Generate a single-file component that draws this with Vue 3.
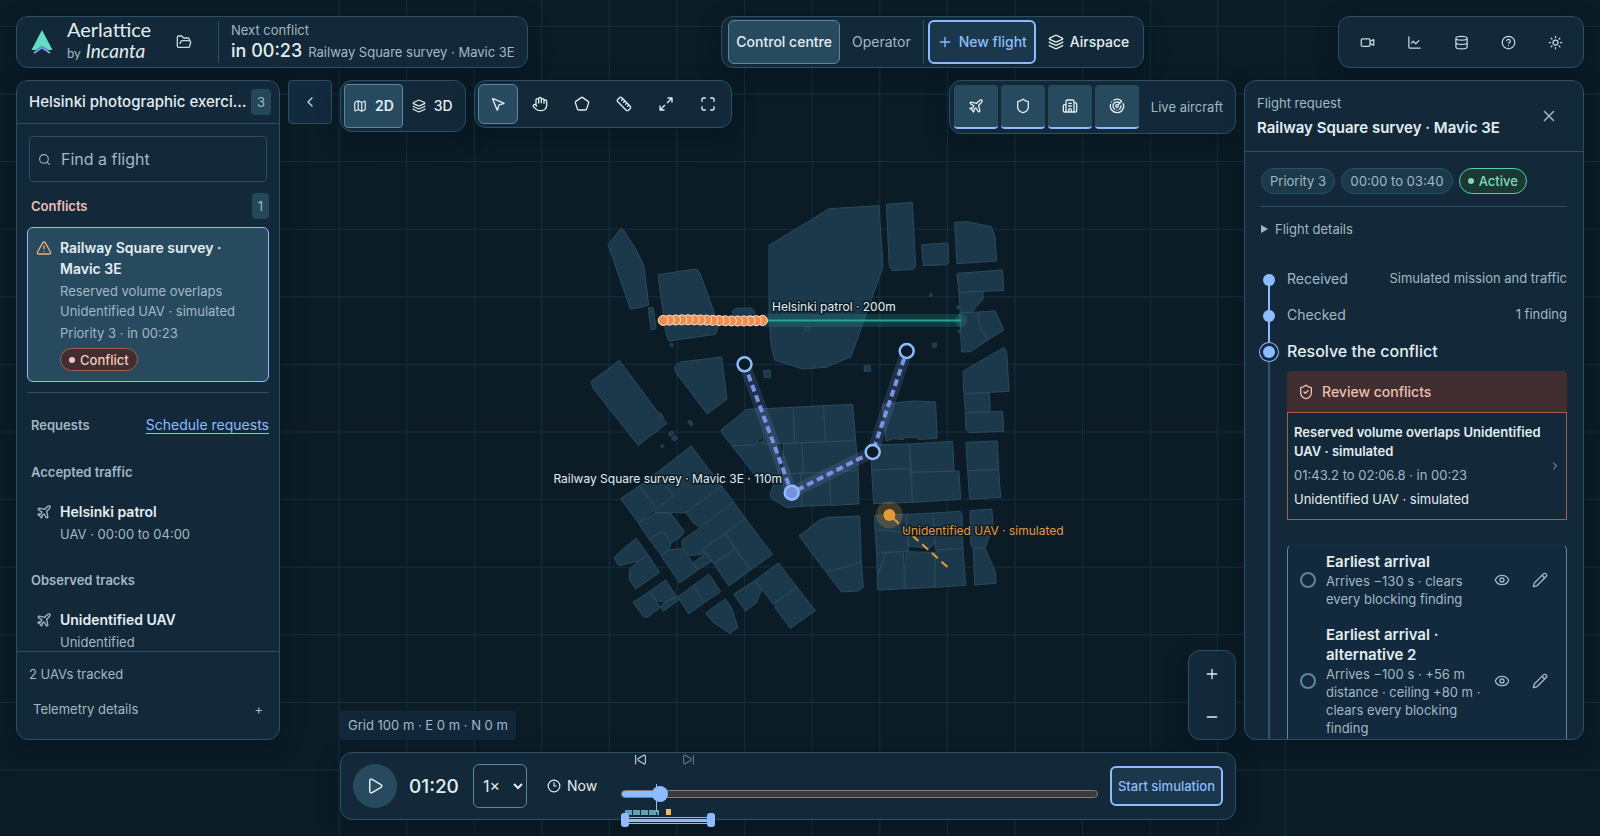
<script setup>
import { h, ref } from 'vue'

const glyphs = {
  folder: 'M6 14l1.5-2.9A2 2 0 0 1 9.24 10H20a2 2 0 0 1 1.94 2.5l-1.54 6a2 2 0 0 1-1.95 1.5H4a2 2 0 0 1-2-2V5a2 2 0 0 1 2-2h3.9a2 2 0 0 1 1.69.9l.81 1.2a2 2 0 0 0 1.67.9H18a2 2 0 0 1 2 2v2',
  map: 'M14.106 5.553a2 2 0 0 0 1.788 0l3.659-1.83A1 1 0 0 1 21 4.619v12.764a1 1 0 0 1-.553.894l-4.553 2.277a2 2 0 0 1-1.788 0l-4.212-2.106a2 2 0 0 0-1.788 0l-3.659 1.83A1 1 0 0 1 3 19.381V6.618a1 1 0 0 1 .553-.894l4.553-2.277a2 2 0 0 1 1.788 0zM15 5.764v15M9 3.236v15',
  layers: 'M12.83 2.18a2 2 0 0 0-1.66 0L2.6 6.08a1 1 0 0 0 0 1.83l8.58 3.91a2 2 0 0 0 1.66 0l8.58-3.9a1 1 0 0 0 0-1.83ZM2 12a1 1 0 0 0 .58.91l8.6 3.91a2 2 0 0 0 1.65 0l8.58-3.9A1 1 0 0 0 22 12M2 17a1 1 0 0 0 .58.91l8.6 3.91a2 2 0 0 0 1.65 0l8.58-3.9A1 1 0 0 0 22 17',
  pointer: 'M4.037 4.688a.495.495 0 0 1 .651-.651l16 6.5a.5.5 0 0 1-.063.947l-6.124 1.58a2 2 0 0 0-1.438 1.435l-1.579 6.126a.5.5 0 0 1-.947.063z',
  hand: 'M18 11V6a2 2 0 0 0-4 0M14 10V4a2 2 0 0 0-4 0v2M10 10.5V6a2 2 0 0 0-4 0v8M18 8a2 2 0 1 1 4 0v6a8 8 0 0 1-8 8h-2c-2.8 0-4.5-.86-5.99-2.34l-3.6-3.6a2 2 0 0 1 2.83-2.82L7 15',
  pentagon: 'M10.83 2.38a2 2 0 0 1 2.34 0l8 5.74a2 2 0 0 1 .73 2.25l-3.04 9.26a2 2 0 0 1-1.9 1.37H7.04a2 2 0 0 1-1.9-1.37L2.1 10.37a2 2 0 0 1 .73-2.25z',
  ruler: 'M21.3 15.3a2.4 2.4 0 0 1 0 3.4l-2.6 2.6a2.4 2.4 0 0 1-3.4 0L2.7 8.7a2.41 2.41 0 0 1 0-3.4l2.6-2.6a2.41 2.41 0 0 1 3.4 0ZM14.5 12.5l2-2M11.5 9.5l2-2M8.5 6.5l2-2M17.5 15.5l2-2',
  expand: 'M15 3h6v6M21 3l-7 7M3 21l7-7M9 21H3v-6',
  frame: 'M8 3H5a2 2 0 0 0-2 2v3M21 8V5a2 2 0 0 0-2-2h-3M3 16v3a2 2 0 0 0 2 2h3M16 21h3a2 2 0 0 0 2-2v-3',
  plane: 'M17.8 19.2 16 11l3.5-3.5C21 6 21.5 4 21 3c-1-.5-3 0-4.5 1.5L13 8 4.8 6.2c-.5-.1-.9.1-1.1.5l-.3.5c-.2.5-.1 1 .3 1.3L9 12l-2 3H4l-1 1 3 2 2 3 1-1v-3l3-2 3.5 5.3c.3.4.8.5 1.3.3l.5-.2c.4-.3.6-.7.5-1.2z',
  shield: 'M20 13c0 5-3.5 7.5-7.66 8.95a1 1 0 0 1-.67-.01C7.5 20.5 4 18 4 13V6a1 1 0 0 1 1-1c2 0 4.5-1.2 6.24-2.72a1.17 1.17 0 0 1 1.52 0C14.51 3.81 17 5 19 5a1 1 0 0 1 1 1z',
  shieldCheck: 'M20 13c0 5-3.5 7.5-7.66 8.95a1 1 0 0 1-.67-.01C7.5 20.5 4 18 4 13V6a1 1 0 0 1 1-1c2 0 4.5-1.2 6.24-2.72a1.17 1.17 0 0 1 1.52 0C14.51 3.81 17 5 19 5a1 1 0 0 1 1 1zM9 12l2 2 4-4',
  building: 'M10 12h4M10 8h4M14 21v-3a2 2 0 0 0-4 0v3M6 10H4a2 2 0 0 0-2 2v7a2 2 0 0 0 2 2h16a2 2 0 0 0 2-2V9a2 2 0 0 0-2-2h-2M6 21V5a2 2 0 0 1 2-2h8a2 2 0 0 1 2 2v16',
  radar: 'M19.07 4.93A10 10 0 0 0 6.99 3.34M4 6h.01M2.29 9.62A10 10 0 1 0 21.31 8.35M16.24 7.76A6 6 0 1 0 8.23 16.67M12 18h.01M17.99 11.66A6 6 0 0 1 15.77 16.67M14 12a2 2 0 1 1-4 0 2 2 0 0 1 4 0M13.41 10.59l5.66-5.66',
  video: 'M16 13l5.223 3.482a.5.5 0 0 0 .777-.416V7.87a.5.5 0 0 0-.752-.432L16 10.5M4 6h10a2 2 0 0 1 2 2v8a2 2 0 0 1-2 2H4a2 2 0 0 1-2-2V8a2 2 0 0 1 2-2z',
  chart: 'M3 3v16a2 2 0 0 0 2 2h16M19 9l-5 5-4-4-3 3',
  database: 'M21 5c0 1.66-4 3-9 3S3 6.66 3 5s4-3 9-3 9 1.34 9 3M3 5v14c0 1.66 4 3 9 3s9-1.34 9-3V5M3 12c0 1.66 4 3 9 3s9-1.34 9-3',
  help: 'M22 12a10 10 0 1 1-20 0 10 10 0 0 1 20 0M9.09 9a3 3 0 0 1 5.83 1c0 2-3 3-3 3M12 17h.01',
  sun: 'M16 12a4 4 0 1 1-8 0 4 4 0 0 1 8 0M12 2v2M12 20v2M4.93 4.93l1.41 1.41M17.66 17.66l1.41 1.41M2 12h2M20 12h2M6.34 17.66l-1.41 1.41M19.07 4.93l-1.41 1.41',
  alert: 'M21.73 18l-8-14a2 2 0 0 0-3.48 0l-8 14A2 2 0 0 0 4 21h16a2 2 0 0 0 1.73-3M12 9v4M12 17h.01',
  eye: 'M2.062 12.348a1 1 0 0 1 0-.696 10.75 10.75 0 0 1 19.876 0 1 1 0 0 1 0 .696 10.75 10.75 0 0 1-19.876 0M15 12a3 3 0 1 1-6 0 3 3 0 0 1 6 0',
  pencil: 'M21.174 6.812a1 1 0 0 0-3.986-3.987L3.842 16.174a2 2 0 0 0-.5.83l-1.321 4.352a.5.5 0 0 0 .623.622l4.353-1.32a2 2 0 0 0 .83-.497zM15 5l4 4',
  play: 'M5 5a2 2 0 0 1 3.008-1.728l11.997 6.998a2 2 0 0 1 .003 3.458l-12 7A2 2 0 0 1 5 19z',
  skipBack: 'M17.971 4.285A2 2 0 0 1 21 6v12a2 2 0 0 1-3.029 1.715l-9.997-5.998a2 2 0 0 1-.003-3.432zM3 20V4',
  skipForward: 'M6.029 4.285A2 2 0 0 0 3 6v12a2 2 0 0 0 3.029 1.715l9.997-5.998a2 2 0 0 0 .003-3.432zM21 4v16',
  clock: 'M22 12a10 10 0 1 1-20 0 10 10 0 0 1 20 0M12 6v6h4',
  search: 'M21 21l-4.34-4.34M19 11a8 8 0 1 1-16 0 8 8 0 0 1 16 0',
  close: 'M18 6L6 18M6 6l12 12',
  left: 'M15 18l-6-6 6-6',
  right: 'M9 18l6-6-6-6',
  plus: 'M5 12h14M12 5v14',
  minus: 'M5 12h14'
}

const Icon = (props) =>
  h('svg', { class: 'icon', viewBox: '0 0 24 24', width: props.size, height: props.size, 'aria-hidden': 'true' }, [
    h('path', { d: glyphs[props.name] })
  ])
Icon.props = { name: String, size: { type: Number, default: 16 } }

const utilities = [
  ['video', 'Camera'], ['chart', 'Analytics'], ['database', 'Data'], ['help', 'Help'], ['sun', 'Theme']
]
const tools = [
  ['pointer', 'Select'], ['hand', 'Pan'], ['pentagon', 'Draw area'],
  ['ruler', 'Measure'], ['expand', 'Fit'], ['frame', 'Full screen']
]
const layers = [
  ['plane', 'Aircraft'], ['shield', 'Zones'], ['building', 'Buildings'], ['radar', 'Radar']
]
const options = [
  { title: 'Earliest arrival', text: 'Arrives −130 s · clears every blocking finding' },
  { title: 'Earliest arrival · alternative 2', text: 'Arrives −100 s · +56 m distance · ceiling +80 m · clears every blocking finding' }
]

const search = ref('')
const choice = ref(null)
const time = ref(80)
const speed = ref('1×')
const duration = 1230

const columns = Array.from({ length: 15 }, (_, i) => 339 + i * 67.6)
const rows = Array.from({ length: 12 }, (_, i) => 26.4 + i * 67.6)
const sightings = Array.from({ length: 17 }, (_, i) => ({
  x: 762.4 - i * 6.2,
  y: 320.4 + Math.sin((16 - i) / 2.6) * -0.6
}))

// City blocks per district, three drawing units to one map unit.
const districts = [
  {
    x: 580, y: 190,
    blocks: [
      '124,114 132,122 168,178 192,228 206,345 180,353 151,357 84,164',
      '234,254 346,237 355,241 361,252 416,405 407,433 266,453 257,425',
      '205,353 220,353 222,364 207,365',
      '206,366 222,364 228,416 213,420',
      '457,364 466,355 514,354 522,362 524,378 462,378',
      '271,460 278,460 278,470 271,470',
      '118,511 260,701 175,766 40,596 33,575',
      '290,524 302,516 425,501 441,627 382,672 286,546 284,532',
      '325,694 330,691 339,702 334,707',
      '238,670 243,670 250,680 247,684',
      '551,541 571,541 571,563 553,563'
    ]
  },
  {
    x: 760, y: 190,
    blocks: [
      '27,166 208,56 357,47 369,230 273,500 198,532 128,537 44,510 33,465 27,380',
      '379,43 457,37 467,228 460,238 397,242 388,230',
      '485,164 560,159 565,163 566,218 558,224 490,227',
      '584,97 620,95 694,110 705,140 710,213 591,221',
      '591,250 728,240 731,301 597,308',
      '597,308 669,304 669,328 636,366 601,368',
      '599,369 655,366 659,412 684,450 631,485 605,486',
      '655,366 706,363 731,420 684,450 659,412',
      '134,411 149,411 149,421 134,421',
      '510,311 516,311 516,319 510,319',
      '591,349 597,349 597,356 591,356',
      '595,421 601,421 601,428 595,428',
      '518,460 529,460 529,472 518,472',
      '313,527 330,527 332,544 313,544',
      '609,544 732,472 740,484 747,604 612,611',
      '612,611 688,607 691,664 616,668',
      '616,668 728,664 731,724 627,728 617,717'
    ]
  },
  {
    x: 550, y: 400,
    blocks: [
      '513,90 590,28 730,22 734,129 641,133 640,110 610,135 546,138 514,97',
      '730,22 821,17 826,125 734,129',
      '821,17 908,13 917,122 826,125',
      '546,138 610,135 636,124 641,133 680,132 690,222 612,222',
      '700,131 756,129 760,219 702,222',
      '756,129 917,122 925,210 760,219',
      '675,245 702,222 752,220 756,319 710,323 664,295 660,280',
      '752,220 839,216 842,315 756,319',
      '839,216 925,212 927,312 842,316',
      '424,138 515,258 408,338 318,338 310,330 320,325 268,258',
      '268,258 330,235 371,288 320,325',
      '212,296 268,258 320,325 265,368',
      '515,258 551,306 450,383 430,368 408,338',
      '265,370 310,342 313,338 362,340 403,394 395,408 363,430 345,400 330,397 298,418',
      '298,418 330,397 345,400 363,430 357,450 335,467',
      '551,306 586,355 526,400 458,447 468,460 420,468 396,440 397,420 450,383',
      '586,355 668,463 602,510 526,400',
      '458,447 526,400 556,447 491,491',
      '491,491 556,447 602,510 537,558',
      '333,467 355,450 398,445 443,510 389,549',
      '430,487 468,460 484,485 443,510',
      '259,415 294,465 268,482 207,497 192,473 215,450',
      '294,465 329,517 257,567 238,540 239,507 268,482',
      '299,574 347,540 380,590 345,607 320,602',
      '249,607 299,574 331,622 293,652 280,650',
      '380,592 386,600 340,634 331,620 345,607',
      '383,591 430,556 463,608 416,642',
      '430,556 477,523 512,575 463,608',
      '526,597 545,625 564,683 540,700 487,665 467,639',
      '551,583 615,541 634,570 620,608 587,633',
      '615,541 685,489 741,561 669,612',
      '676,608 741,561 796,632 721,685 676,625',
      '355,100 366,93 372,100 360,108',
      '364,113 376,107 383,115 373,123',
      '332,138 338,134 342,139 337,144',
      '413,67 418,63 429,73 424,78'
    ]
  },
  {
    x: 770, y: 400,
    blocks: [
      '337,13 430,3 497,6 501,115 445,118 440,112 405,112 400,118 370,116 348,123',
      '303,135 418,132 421,206 305,210',
      '418,132 548,124 552,213 425,217',
      '305,210 421,206 427,307 311,311',
      '425,217 567,213 572,298 427,307',
      '588,127 682,123 686,209 593,212',
      '593,212 686,209 692,292 599,297',
      '600,332 665,327 669,365 667,385 646,442 608,444 602,430',
      '610,446 645,443 676,515 678,550 614,555',
      '87,408 150,359 175,352 269,348 274,486 169,517',
      '169,517 274,486 280,562 265,573 214,576',
      '313,346 408,343 411,398 315,388',
      '315,388 411,398 416,453 320,458',
      '409,343 490,339 494,432 478,445 416,438',
      '490,339 570,334 576,342 579,445 496,450',
      '320,458 349,458 322,528',
      '349,458 400,455 403,566 323,570 322,528',
      '406,455 496,457 495,562 403,566',
      '503,450 579,445 587,556 495,562 496,458'
    ]
  }
]
</script>

<template>
  <div class="app">
    <svg class="map" viewBox="0 0 1600 836" preserveAspectRatio="xMidYMid slice" role="img" aria-label="Airspace map">
      <g class="grid-lines">
        <line v-for="x in columns" :key="'c' + x" :x1="x" :x2="x" y1="0" y2="836" />
        <line v-for="y in rows" :key="'r' + y" x1="0" x2="1600" :y1="y" :y2="y" />
      </g>
      <g v-for="d in districts" :key="d.x + '-' + d.y" :transform="`translate(${d.x} ${d.y}) scale(0.33333)`">
        <polygon v-for="b in d.blocks" :key="b" class="block" :points="b" />
      </g>
      <path class="patrol-band" d="M762 320.5H961" />
      <circle class="patrol-end" cx="961" cy="320.5" r="6.5" />
      <path class="patrol-line" d="M762 320.5H961" />
      <circle v-for="s in sightings" :key="s.x" class="sighting" :cx="s.x" :cy="s.y" r="5" />
      <path class="route-band" d="M744.5 364.3 791.7 492.7 872.7 452 906.7 351" />
      <path class="route-line" d="M744.5 364.3 791.7 492.7 872.7 452 906.7 351" />
      <circle class="waypoint" cx="744.5" cy="364.3" r="7" />
      <circle class="waypoint current" cx="791.7" cy="492.7" r="7" />
      <circle class="waypoint" cx="872.7" cy="452" r="7" />
      <circle class="waypoint" cx="906.7" cy="351" r="7" />
      <circle class="unknown-halo" cx="889.4" cy="515" r="13.5" />
      <circle class="unknown-dot" cx="889.4" cy="515" r="6" />
      <path class="unknown-line" d="M889.4 515 947.5 567" />
      <text class="label" x="772" y="311">Helsinki patrol · 200m</text>
      <text class="label end" x="782" y="483">Railway Square survey · Mavic 3E · 110m</text>
      <text class="label warn" x="902" y="535">Unidentified UAV · simulated</text>
    </svg>

    <header class="topbar">
      <div class="panel brand-panel">
        <svg class="logo" viewBox="0 0 22 24" width="22" height="24" aria-hidden="true">
          <path d="M11 0 21.500 20H17L11 16 5 20H.5z" fill="#62dfc0" />
          <path d="M3 23 11 17.500 19 23" fill="none" stroke="#7f9df5" stroke-width="2" />
        </svg>
        <div class="brand">
          <span class="brand-name">Aerlattice</span>
          <span class="brand-by">by <em>Incanta</em></span>
        </div>
        <button class="tool" aria-label="Open project"><Icon name="folder" /></button>
        <div class="next">
          <span class="small">Next conflict</span>
          <div class="next-row"><strong>in 00:23</strong><span class="small">Railway Square survey · Mavic 3E</span></div>
        </div>
      </div>
      <nav class="panel nav">
        <button class="nav-btn active">Control centre</button>
        <button class="nav-btn muted">Operator</button>
        <span class="nav-split"></span>
        <button class="nav-btn outline"><Icon name="plus" />New flight</button>
        <button class="nav-btn"><Icon name="layers" />Airspace</button>
      </nav>
      <div class="panel utilities">
        <button v-for="[icon, name] in utilities" :key="icon" class="tool" :aria-label="name"><Icon :name="icon" :size="15" /></button>
      </div>
    </header>

    <aside class="panel sidebar">
      <div class="side-head">
        <h2>Helsinki photographic exerci…</h2>
        <span class="badge">3</span>
      </div>
      <div class="side-body">
        <label class="search">
          <Icon name="search" :size="13" />
          <input v-model="search" type="text" placeholder="Find a flight" aria-label="Find a flight" />
        </label>
        <div class="group-head danger"><h3>Conflicts</h3><span class="badge">1</span></div>
        <button class="conflict-card">
          <Icon name="alert" />
          <span class="card-text">
            <span class="item-title">Railway Square survey · Mavic 3E</span>
            <span class="card-sub">Reserved volume overlaps Unidentified UAV · simulated</span>
            <span class="card-sub">Priority 3 · in 00:23</span>
            <span class="tag conflict">Conflict</span>
          </span>
        </button>
        <hr />
        <div class="group-head requests"><h3>Requests</h3><a href="#">Schedule requests</a></div>
        <div class="group-head"><h3>Accepted traffic</h3></div>
        <button class="track">
          <Icon name="plane" />
          <span class="card-text"><span class="item-title">Helsinki patrol</span><span class="track-sub">UAV · 00:00 to 04:00</span></span>
        </button>
        <div class="group-head"><h3>Observed tracks</h3></div>
        <button class="track">
          <Icon name="plane" />
          <span class="card-text"><span class="item-title">Unidentified UAV</span><span class="track-sub">Unidentified</span></span>
        </button>
      </div>
      <div class="side-foot">
        <p>2 UAVs tracked</p>
        <button class="telemetry"><span>Telemetry details</span><span>+</span></button>
      </div>
    </aside>

    <button class="collapse" aria-label="Collapse list"><Icon name="left" /></button>

    <main class="stage">
      <div class="stage-top">
        <div class="panel view-switch">
          <button class="view active"><Icon name="map" :size="14" />2D</button>
          <button class="view"><Icon name="layers" :size="14" />3D</button>
        </div>
        <div class="panel toolset">
          <button v-for="([icon, name], i) in tools" :key="icon" class="draw" :class="{ active: i === 0 }" :aria-label="name"><Icon :name="icon" /></button>
        </div>
        <div class="panel layerset">
          <button v-for="[icon, name] in layers" :key="icon" class="layer" :aria-label="name"><Icon :name="icon" /></button>
          <span class="small">Live aircraft</span>
        </div>
      </div>
      <div class="stage-bottom">
        <span class="grid-note">Grid 100 m · E 0 m · N 0 m</span>
        <div class="panel zoomer">
          <button class="zoom" aria-label="Zoom in"><Icon name="plus" /></button>
          <button class="zoom" aria-label="Zoom out"><Icon name="minus" /></button>
        </div>
      </div>
    </main>

    <section class="panel request">
      <div class="request-head">
        <div>
          <p class="small">Flight request</p>
          <h2>Railway Square survey · Mavic 3E</h2>
        </div>
        <button class="tool" aria-label="Close"><Icon name="close" :size="18" /></button>
      </div>
      <div class="request-body">
        <div class="chips">
          <span class="chip">Priority 3</span>
          <span class="chip">00:00 to 03:40</span>
          <span class="chip live">Active</span>
        </div>
        <button class="details"><span class="caret"></span>Flight details</button>
        <ol class="steps">
          <li class="step"><span>Received</span><span class="small">Simulated mission and traffic</span></li>
          <li class="step"><span>Checked</span><span class="small">1 finding</span></li>
          <li class="step now">
            <h3>Resolve the conflict</h3>
            <button class="review"><Icon name="shieldCheck" />Review conflicts</button>
            <button class="finding">
              <span class="finding-text">
                <strong>Reserved volume overlaps Unidentified UAV · simulated</strong>
                <span>01:43.2 to 02:06.8 · in 00:23</span>
                <span class="bright">Unidentified UAV · simulated</span>
              </span>
              <Icon name="right" :size="12" />
            </button>
            <div class="options">
              <div v-for="(o, i) in options" :key="o.title" class="option">
                <input :id="'option' + i" v-model="choice" type="radio" name="resolution" :value="i" />
                <label :for="'option' + i"><strong>{{ o.title }}</strong><span>{{ o.text }}</span></label>
                <button class="mini" aria-label="Preview"><Icon name="eye" /></button>
                <button class="mini" aria-label="Edit"><Icon name="pencil" /></button>
              </div>
            </div>
          </li>
        </ol>
      </div>
    </section>

    <footer class="panel timeline">
      <button class="play" aria-label="Play"><Icon name="play" :size="18" /></button>
      <span class="clock">01:20</span>
      <select v-model="speed" class="speed" aria-label="Speed">
        <option>1×</option>
        <option>2×</option>
        <option>4×</option>
      </select>
      <button class="now-btn"><Icon name="clock" :size="14" />Now</button>
      <div class="scrub">
        <div class="skips">
          <button aria-label="Previous event"><Icon name="skipBack" :size="13" /></button>
          <button aria-label="Next event" disabled><Icon name="skipForward" :size="13" /></button>
        </div>
        <input v-model="time" type="range" min="0" :max="duration" aria-label="Time" :style="{ '--fill': (time / duration) * 100 + 1 + '%' }" />
        <span class="playhead"></span>
        <div class="events">
          <i></i><i></i><i></i><i></i><i class="short"></i><i class="hot"></i>
        </div>
        <div class="window">
          <button aria-label="Window start"></button><span></span><button aria-label="Window end"></button>
        </div>
      </div>
      <button class="start">Start simulation</button>
    </footer>
  </div>
</template>

<style>
body {
  margin: 0;
  background: #0b1c27;
}
</style>

<style scoped>
.app {
  --panel: #132939;
  --line: #2b5064;
  --active: #284a5f;
  --edge: #5d879c;
  --accent: #8cbcff;
  --text: #e2edf2;
  --muted: #a2b8c5;
  position: relative;
  box-sizing: border-box;
  height: 100vh;
  padding: 16px;
  display: grid;
  grid-template-columns: 264px 44px minmax(0, 1fr) 340px;
  grid-template-rows: 52px minmax(0, 1fr) 68px;
  column-gap: 8px;
  row-gap: 12px;
  overflow: hidden;
  background: #0b1c27;
  color: var(--text);
  font-family: Inter, "Liberation Sans", sans-serif;
  font-size: 14px;
  line-height: 20px;
}
.app *,
.app *::before,
.app *::after {
  box-sizing: border-box;
}
h2, h3, p, ol {
  margin: 0;
  padding: 0;
}
button {
  margin: 0;
  padding: 0;
  border: 0;
  background: none;
  color: inherit;
  font: inherit;
  text-align: left;
  cursor: pointer;
}
.icon {
  flex: none;
  fill: none;
  stroke: currentColor;
  stroke-width: 2;
  stroke-linecap: round;
  stroke-linejoin: round;
}
.small {
  font-size: 13px;
  line-height: 18px;
  color: var(--muted);
}

/* map */
.map {
  position: absolute;
  inset: 0;
  width: 100%;
  height: 100%;
}
.grid-lines line { stroke: #142f40; stroke-width: 1; }
.block { fill: #1c394c; stroke: #2a4a5d; stroke-width: 3; stroke-linejoin: round; }
.patrol-band { stroke: #26a594; stroke-opacity: .22; stroke-width: 13; }
.patrol-end { fill: #26a594; fill-opacity: .22; }
.patrol-line { stroke: #26a594; stroke-width: 2; }
.sighting { fill: #f28c4b; stroke: #ffe9dc; stroke-width: 1; }
.route-band { fill: none; stroke: #7b8fe0; stroke-opacity: .18; stroke-width: 12; stroke-linejoin: round; }
.route-line { fill: none; stroke: #7b92e4; stroke-width: 4; stroke-dasharray: 7 4; }
.waypoint { fill: #0b1c27; stroke: #8cbcff; stroke-width: 2.5; }
.waypoint.current { fill: #7b8fe0; }
.unknown-halo { fill: #e59a3a; fill-opacity: .24; }
.unknown-dot { fill: #e59a3a; }
.unknown-line { stroke: #e59a3a; stroke-width: 2; stroke-dasharray: 8 5; stroke-dashoffset: -5; }
.label {
  fill: #e2edf2;
  font-size: 12px;
  paint-order: stroke;
  stroke: #0b1c27;
  stroke-width: 3;
  stroke-linejoin: round;
}
.label.end { text-anchor: end; }
.label.warn { fill: #e59a3a; }

/* shared panels */
.panel {
  position: relative;
  border: 1px solid var(--line);
  border-radius: 12px;
  background: var(--panel);
  box-shadow: 0 8px 24px rgba(3, 12, 20, .3);
}
.badge {
  display: grid;
  place-items: center;
  padding: 4px 6px;
  border-radius: 4px;
  background: #24475a;
  color: var(--muted);
  font-size: 13px;
  line-height: 18px;
}
.tool {
  width: 44px;
  height: 44px;
  display: grid;
  place-items: center;
  color: #c8d8e0;
}

/* top bar */
.topbar {
  grid-column: 1 / -1;
  display: flex;
  justify-content: space-between;
}
.brand-panel {
  display: flex;
  align-items: center;
  padding: 0 12px 0 14px;
}
.logo { margin-right: 14px; }
.brand {
  width: 95px;
  padding-bottom: 4px;
  display: flex;
  flex-direction: column;
  font-family: Lato, sans-serif;
  white-space: nowrap;
}
.brand-name { font-size: 20px; line-height: 24px; }
.brand-by { font-size: 13px; line-height: 20px; color: var(--muted); }
.brand-by em { font-size: 19px; color: var(--text); margin-left: 2px; }
.next {
  margin-left: 12px;
  padding-left: 12px;
  border-left: 1px solid var(--line);
  display: flex;
  flex-direction: column;
}
.next-row { display: flex; align-items: baseline; gap: 6px; }
.next-row strong { font-size: 18px; line-height: 24px; font-weight: 500; }
.nav {
  display: flex;
  align-items: center;
  gap: 4px;
  padding: 0 6px;
}
.nav-btn {
  height: 44px;
  display: flex;
  align-items: center;
  gap: 6px;
  padding: 0 7px;
  border: 1px solid transparent;
  border-radius: 6px;
  font-weight: 500;
  white-space: nowrap;
}
.nav-btn.active { background: var(--active); border-color: var(--edge); }
.nav-btn.muted { color: var(--muted); font-weight: 400; }
.nav-btn.outline { border: 2px solid var(--accent); background: #1b374b; color: var(--accent); }
.nav-split { width: 1px; height: 44px; background: var(--line); }
.utilities {
  display: flex;
  align-items: center;
  gap: 3px;
  padding: 0 6px;
}

/* sidebar */
.sidebar {
  grid-column: 1;
  grid-row: 2;
  display: flex;
  flex-direction: column;
  overflow: hidden;
}
.side-head {
  flex: none;
  height: 43px;
  padding: 0 8px 0 12px;
  display: flex;
  align-items: center;
  justify-content: space-between;
  gap: 4px;
  border-bottom: 1px solid var(--line);
}
.side-head h2 {
  white-space: nowrap;
  font-size: 15px;
  font-weight: 500;
}
.side-body {
  flex: 1;
  min-height: 0;
  overflow: hidden;
  padding: 12px 10px 0;
}
.search {
  height: 46px;
  margin: 0 2px;
  padding: 0 8px;
  display: flex;
  align-items: center;
  gap: 10px;
  border: 1px solid var(--line);
  border-radius: 4px;
  color: var(--muted);
}
.search input {
  flex: 1;
  min-width: 0;
  border: 0;
  padding: 0;
  outline: 0;
  background: none;
  color: var(--text);
  font: inherit;
  font-size: 16px;
}
.search input::placeholder { color: var(--muted); opacity: 1; }
.group-head {
  height: 46px;
  padding-left: 4px;
  display: flex;
  align-items: center;
  justify-content: space-between;
  color: var(--muted);
}
.group-head h3 { font-size: 13px; font-weight: 600; }
.group-head.danger { height: 45px; padding-top: 3px; color: #eebfb4; }
.group-head.requests { height: 48px; margin-top: 8px; }
.group-head a { color: var(--accent); text-underline-offset: 3px; }
.conflict-card {
  width: 100%;
  padding: 9px 8px 10px;
  display: flex;
  gap: 8px;
  border: 1px solid var(--accent);
  border-radius: 6px;
  background: var(--active);
}
.conflict-card .icon { margin-top: 3px; color: #e0b184; }
.card-text { display: flex; flex-direction: column; align-items: flex-start; }
.item-title { font-size: 14px; line-height: 21px; font-weight: 600; }
.card-sub { margin-top: 2px; font-size: 13px; line-height: 20px; color: var(--muted); }
.tag {
  margin-top: 5px;
  height: 23px;
  padding: 0 8px;
  display: flex;
  align-items: center;
  gap: 5px;
  border: 1px solid;
  border-radius: 12px;
  font-size: 13px;
  font-weight: 500;
}
.tag::before, .chip.live::before {
  content: "";
  width: 6px;
  height: 6px;
  border-radius: 50%;
  background: currentColor;
}
.tag.conflict { border-color: #a65d50; background: #412e30; color: #f4c9bf; }
hr { margin: 10px 0 0; border: 0; border-top: 1px solid var(--line); }
.track {
  width: 100%;
  height: 62px;
  padding: 6px 9px;
  display: flex;
  gap: 8px;
  color: var(--text);
}
.track .icon { margin-top: 3px; color: var(--muted); }
.track-sub { margin-top: 2px; font-size: 13px; line-height: 20px; color: var(--muted); }
.side-foot {
  flex: none;
  padding: 12px 12px 8px;
  border-top: 1px solid var(--line);
  color: var(--muted);
  font-size: 13px;
}
.telemetry {
  width: 100%;
  height: 44px;
  margin-top: 3px;
  padding: 0 4px;
  display: flex;
  align-items: center;
  justify-content: space-between;
}
.collapse {
  position: relative;
  grid-column: 2;
  grid-row: 2;
  height: 44px;
  display: grid;
  place-items: center;
  border: 1px solid var(--line);
  border-radius: 4px;
  background: #13293d;
  color: #c8d8e0;
}

/* stage */
.stage {
  position: relative;
  grid-column: 3;
  grid-row: 2;
  display: flex;
  flex-direction: column;
  justify-content: space-between;
}
.stage-top { display: flex; align-items: flex-start; gap: 8px; }
.view-switch, .toolset { display: flex; padding: 3px; }
.toolset { gap: 2px; }
.view {
  height: 44px;
  padding: 0 8px;
  display: flex;
  align-items: center;
  gap: 8px;
  border: 1px solid transparent;
  border-radius: 4px;
  font-weight: 500;
}
.view.active, .draw.active { background: var(--active); border-color: var(--edge); }
.view.active { font-weight: 600; }
.draw {
  width: 40px;
  height: 40px;
  display: grid;
  place-items: center;
  border: 1px solid transparent;
  border-radius: 6px;
}
.layerset {
  margin-left: auto;
  display: flex;
  align-items: center;
  gap: 3px;
  padding: 4px 12px 4px 4px;
}
.layerset .small { margin-left: 9px; }
.layer {
  width: 44px;
  height: 44px;
  display: grid;
  place-items: center;
  border-radius: 4px;
  border-bottom: 2px solid var(--accent);
  background: var(--active);
}
.stage-bottom { display: flex; align-items: flex-end; justify-content: space-between; }
.grid-note {
  padding: 5px 8px 6px;
  border-radius: 4px;
  background: #12283a;
  color: var(--muted);
  font-size: 13px;
  line-height: 18px;
}
.zoomer { width: 48px; padding: 1px; }
.zoom { width: 44px; height: 43px; display: grid; place-items: center; }

/* request panel */
.request {
  grid-column: 4;
  grid-row: 2;
  display: flex;
  flex-direction: column;
  overflow: hidden;
}
.request-head {
  flex: none;
  height: 71px;
  padding: 0 12px;
  display: flex;
  align-items: center;
  justify-content: space-between;
  border-bottom: 1px solid var(--line);
}
.request-head h2 { margin-top: 6px; font-size: 15px; font-weight: 600; }
.request-head .tool { color: var(--muted); }
.request-body { flex: 1; min-height: 0; overflow: hidden; padding: 16px 16px 0; }
.chips {
  display: flex;
  gap: 6px;
  padding-bottom: 12px;
  border-bottom: 1px solid var(--line);
}
.chip {
  height: 26px;
  padding: 0 8px;
  display: flex;
  align-items: center;
  gap: 5px;
  border: 1px solid var(--line);
  border-radius: 13px;
  background: #1c394c;
  color: var(--muted);
  font-size: 13px;
  font-variant-numeric: tabular-nums;
}
.chip.live { border-color: #54cda8; background: #1b3933; color: #7fd9bd; font-weight: 500; }
.details {
  width: 100%;
  height: 44px;
  display: flex;
  align-items: center;
  gap: 7px;
  color: var(--muted);
  font-size: 13px;
}
.caret {
  border-left: 7px solid var(--muted);
  border-top: 4px solid transparent;
  border-bottom: 4px solid transparent;
}
.steps { list-style: none; padding: 9px 0 0; }
.step {
  position: relative;
  height: 36px;
  padding-left: 26px;
  padding-top: 9px;
  display: flex;
  justify-content: space-between;
  color: var(--muted);
}
.step::before {
  content: "";
  position: absolute;
  left: 7px;
  top: 20px;
  width: 2px;
  height: 36px;
  background: var(--accent);
}
.step::after {
  content: "";
  position: absolute;
  left: 2px;
  top: 14px;
  width: 12px;
  height: 12px;
  border-radius: 50%;
  background: var(--accent);
}
.step.now { display: block; height: auto; padding-top: 8px; color: var(--text); }
.step.now::before { height: 100%; background: #31566b; }
.step.now::after { box-shadow: 0 0 0 3px var(--panel), 0 0 0 4px var(--accent); }
.step h3 { font-size: 16px; line-height: 22px; font-weight: 500; }
.review {
  width: 100%;
  height: 41px;
  margin-top: 9px;
  padding: 0 11px;
  display: flex;
  align-items: center;
  gap: 8px;
  border-radius: 4px 4px 0 0;
  background: #412e30;
  color: #eebfb4;
  font-weight: 500;
}
.finding {
  width: 100%;
  padding: 10px 5px 10px 6px;
  display: flex;
  align-items: center;
  border: 1px solid #a65d50;
  font-size: 13px;
  color: var(--muted);
}
.finding-text { flex: 1; display: flex; flex-direction: column; gap: 5px; line-height: 19px; }
.finding strong { font-weight: 600; color: var(--text); }
.bright { color: var(--text); }
.options {
  margin-top: 24px;
  border: 1px solid #5d879c;
  border-top-color: #163145;
  border-radius: 6px;
  background: #13293d;
}
.option {
  padding: 7px 7px 8px 12px;
  display: flex;
  align-items: center;
}
.option + .option { padding-top: 9px; }
.option input {
  appearance: none;
  flex: none;
  width: 16px;
  height: 16px;
  margin: 0 10px 0 0;
  border: 2px solid #5d879c;
  border-radius: 50%;
}
.option label { flex: 1; min-width: 0; display: flex; flex-direction: column; }
.option strong { font-size: 15px; line-height: 20px; font-weight: 600; }
.option label span { font-size: 13px; line-height: 18px; color: var(--muted); }
.mini { width: 38px; height: 38px; display: grid; place-items: center; color: var(--muted); }

/* timeline */
.timeline {
  grid-column: 3;
  grid-row: 3;
  display: flex;
  align-items: center;
  padding: 0 12px;
}
.play {
  flex: none;
  width: 44px;
  height: 44px;
  display: grid;
  place-items: center;
  border-radius: 50%;
  background: var(--active);
}
.clock { width: 52px; margin: 0 12px; padding-top: 1px; font-size: 19px; font-weight: 500; }
.speed {
  width: 54px;
  height: 44px;
  padding: 0 0 0 5px;
  border: 1px solid var(--edge);
  border-radius: 6px;
  background: var(--panel);
  color: var(--text);
  font: inherit;
  font-size: 16px;
}
.now-btn { margin-left: 20px; display: flex; align-items: center; gap: 6px; }
.scrub {
  position: relative;
  flex: 1;
  height: 66px;
  margin: 0 12px 0 24px;
}
.skips { height: 13px; padding-left: 13px; display: flex; gap: 35px; }
.skips button { height: 13px; display: grid; color: #c8d8e0; }
.skips button:disabled { opacity: .45; }
.scrub input {
  appearance: none;
  display: block;
  width: 100%;
  height: 16px;
  margin: 20px 0 0;
  background: none;
}
.scrub input::-webkit-slider-runnable-track {
  height: 8px;
  border: 1px solid #85797a;
  border-radius: 4px;
  background: linear-gradient(to right, var(--accent) var(--fill), #3a393c var(--fill));
}
.scrub input::-webkit-slider-thumb {
  appearance: none;
  width: 16px;
  height: 16px;
  margin-top: -5px;
  border-radius: 50%;
  background: var(--accent);
}
.playhead {
  position: absolute;
  left: 35px;
  top: 31px;
  width: 1px;
  height: 28px;
  background: var(--accent);
}
.events { display: flex; align-items: center; gap: 1px; height: 6px; margin: 7px 0 0 4px; }
.events i { width: 7px; height: 5px; background: #5fa3b3; }
.events .short { width: 2px; }
.events .hot { width: 5px; height: 6px; margin-left: 6px; background: #f2b860; }
.window {
  position: absolute;
  left: 0;
  top: 60px;
  width: 94px;
  display: flex;
  align-items: center;
}
.window button { width: 8px; height: 14px; border-radius: 3px; background: var(--accent); }
.window span {
  flex: 1;
  height: 7px;
  border: solid var(--accent);
  border-width: 1px 0;
  background: linear-gradient(var(--accent), var(--accent)) center / 100% 3px no-repeat var(--panel);
}
.start {
  height: 40px;
  padding: 0 6px;
  border: 2px solid var(--accent);
  border-radius: 6px;
  background: #1b374b;
  color: var(--accent);
  font-size: 13px;
  font-weight: 500;
  white-space: nowrap;
}
</style>
